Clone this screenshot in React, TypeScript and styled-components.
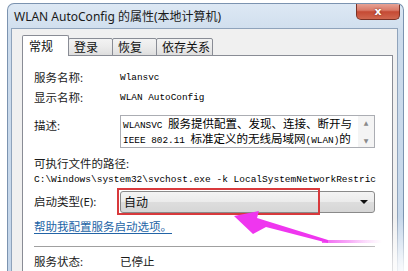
import React from "react";
import styled, { createGlobalStyle } from "styled-components";

const Global = createGlobalStyle`
  html, body { margin: 0; padding: 0; background: #ffffff; }
  #root { width: 408px; height: 271px; overflow: hidden; }
`;

const CJK = `"Noto Sans", "Noto Sans CJK SC", sans-serif`;
const MONO = `"Liberation Mono", "Noto Sans CJK SC", monospace`;

const Page = styled.div`
  position: relative;
  width: 408px;
  height: 271px;
  padding: 3px 0 0 7px;
  box-sizing: border-box;
  overflow: hidden;
`;

const Window = styled.div`
  width: 397px;
  height: 268px;
  box-sizing: border-box;
  border: 1px solid #7b93b0;
  border-bottom: none;
  border-radius: 7px 7px 0 0;
  background: linear-gradient(180deg, #dde8f4 0%, #cddcec 12%, #c4d6ea 100%);
  display: flex;
  flex-direction: column;
  overflow: hidden;
`;

const TitleBar = styled.div`
  height: 24px;
  flex: none;
  display: flex;
  align-items: flex-start;
  padding-left: 6px;
  padding-right: 3px;
`;

const Title = styled.div`
  flex: 1;
  font-family: ${CJK};
  font-size: 12px;
  line-height: 22px;
  color: #1a1a1a;
  padding-top: 2px;
  white-space: nowrap;
`;

const CloseButton = styled.div`
  width: 44px;
  height: 17px;
  margin-top: -1px;
  box-sizing: border-box;
  border: 1px solid #7a3226;
  border-top: none;
  border-radius: 0 0 5px 5px;
  background: linear-gradient(180deg, #e9a89c 0%, #d97a68 45%, #c54a34 55%, #d0674f 100%);
  display: flex;
  align-items: center;
  justify-content: center;
  color: #ffffff;
  font-family: "DejaVu Sans", sans-serif;
  font-weight: bold;
  font-size: 11px;
  text-shadow: 0 0 2px #6a1f14;
`;

const Body = styled.div`
  flex: 1;
  margin: 0 5px 0 3px;
  border: 1px solid #8fa3bb;
  border-bottom: none;
  background: #f0f0f0;
  padding: 6px 4px 0 10px;
  display: flex;
  flex-direction: column;
  min-height: 0;
`;

const TabRow = styled.div`
  display: flex;
  align-items: flex-end;
  height: 21px;
  flex: none;
  position: relative;
  z-index: 1;
`;

const Tab = styled.div<{ $active?: boolean; $w: number }>`
  width: ${(p) => p.$w}px;
  height: ${(p) => (p.$active ? 21 : 18)}px;
  box-sizing: border-box;
  margin-left: ${(p) => (p.$active ? 0 : -1)}px;
  border: 1px solid #898c95;
  border-bottom: ${(p) => (p.$active ? "none" : "1px solid #898c95")};
  border-radius: 2px 2px 0 0;
  background: ${(p) =>
    p.$active ? "#ffffff" : "linear-gradient(180deg, #f3f3f3 0%, #ebebeb 50%, #dedede 100%)"};
  font-family: ${CJK};
  font-size: 12px;
  color: #111;
  display: flex;
  align-items: center;
  padding-left: ${(p) => (p.$active ? 6 : 5)}px;
  padding-bottom: ${(p) => (p.$active ? 1 : 0)}px;
  z-index: ${(p) => (p.$active ? 2 : 1)};
`;

const Panel = styled.div`
  flex: 1;
  margin-top: -1px;
  border: 1px solid #898c95;
  border-bottom: none;
  background: #ffffff;
  padding: 12px 17px 0 11px;
  display: flex;
  flex-direction: column;
`;

const Row = styled.div<{ $h: number; $mt?: number; $top?: boolean }>`
  display: grid;
  grid-template-columns: 86px 1fr;
  align-items: ${(p) => (p.$top ? "start" : "center")};
  min-height: ${(p) => p.$h}px;
  margin-top: ${(p) => p.$mt ?? 0}px;
`;

const Label = styled.div<{ $pt?: number }>`
  font-family: ${CJK};
  font-size: 11.5px;
  line-height: 18px;
  color: #1a1a1a;
  padding-top: ${(p) => p.$pt ?? 0}px;
  white-space: nowrap;
`;

const MonoValue = styled.div<{ $size?: number }>`
  font-family: ${MONO};
  font-size: ${(p) => p.$size ?? 9.4}px;
  line-height: 14px;
  color: #000;
  white-space: nowrap;
`;

const PlainValue = styled.div`
  font-family: ${CJK};
  font-size: 11.5px;
  line-height: 18px;
  color: #1a1a1a;
`;

const DescBox = styled.div`
  height: 33px;
  box-sizing: border-box;
  border: 1px solid #abadb3;
  background: #fff;
  display: flex;
  overflow: hidden;
`;

const DescText = styled.div`
  flex: 1;
  padding: 1px 0 0 2px;
  font-family: "Noto Sans CJK SC", sans-serif;
  font-size: 11.5px;
  line-height: 13px;
  color: #000;
  white-space: nowrap;
`;

const Asc = styled.span`
  font-family: ${MONO};
  font-size: 9.4px;
`;

const ScrollBar = styled.div`
  width: 16px;
  flex: none;
  background: #f4f4f4;
  display: flex;
  flex-direction: column;
  justify-content: space-between;
  align-items: center;
  padding: 4px 0 3px;
  color: #8a8a8a;
  font-size: 6px;
  font-family: "DejaVu Sans", sans-serif;
  line-height: 6px;
`;

const Block = styled.div<{ $mt?: number }>`
  margin-top: ${(p) => p.$mt ?? 0}px;
`;

const ComboWrap = styled.div`
  position: relative;
  height: 22px;
`;

const Combo = styled.div`
  height: 22px;
  box-sizing: border-box;
  border: 1px solid #8a8a8a;
  border-radius: 3px;
  background: linear-gradient(180deg, #f4f4f4 0%, #ebebeb 50%, #dddddd 52%, #d6d6d6 100%);
  display: flex;
  align-items: center;
  justify-content: space-between;
  padding: 0 6px 0 3px;
  font-family: ${CJK};
  font-size: 12px;
  color: #111;
`;

const Caret = styled.span`
  width: 0;
  height: 0;
  border-left: 4px solid transparent;
  border-right: 4px solid transparent;
  border-top: 4px solid #111;
`;

const Highlight = styled.div`
  position: absolute;
  left: -3px;
  top: -3px;
  width: 203px;
  height: 27px;
  box-sizing: border-box;
  border: 2px solid #d8393c;
  pointer-events: none;
`;

const HelpLink = styled.a`
  display: block;
  font-family: ${CJK};
  font-size: 11.5px;
  line-height: 16px;
  color: #2364a6;
  text-decoration: underline;
  text-underline-offset: 2px;
`;

const Separator = styled.div`
  height: 1px;
  background: #a0a0a0;
  margin-top: 11px;
`;

const Overlay = styled.svg`
  position: absolute;
  left: 0;
  top: 0;
  pointer-events: none;
`;

const Fade = styled.div`
  position: absolute;
  inset: 0;
  pointer-events: none;
  background: radial-gradient(ellipse 70px 55px at 408px 271px, rgba(255,255,255,0.95), rgba(255,255,255,0) 100%);
`;

export default function App() {
  return (
    <>
      <Global />
      <Page>
        <Window>
          <TitleBar>
            <Title>WLAN AutoConfig 的属性(本地计算机)</Title>
            <CloseButton>x</CloseButton>
          </TitleBar>
          <Body>
            <TabRow>
              <Tab $active $w={47}>常规</Tab>
              <Tab $w={45}>登录</Tab>
              <Tab $w={45}>恢复</Tab>
              <Tab $w={57}>依存关系</Tab>
            </TabRow>
            <Panel>
              <Row $h={20}>
                <Label>服务名称:</Label>
                <MonoValue>Wlansvc</MonoValue>
              </Row>
              <Row $h={20}>
                <Label>显示名称:</Label>
                <MonoValue>WLAN AutoConfig</MonoValue>
              </Row>
              <Row $h={33} $mt={7} $top>
                <Label $pt={2}>描述:</Label>
                <DescBox>
                  <DescText>
                    <div>
                      <Asc>WLANSVC </Asc>服务提供配置、发现、连接、断开与
                    </div>
                    <div>
                      <Asc>IEEE 802.11 </Asc>标准定义的无线局域网<Asc>(WLAN)</Asc>的
                    </div>
                  </DescText>
                  <ScrollBar>
                    <span>▲</span>
                    <span>▼</span>
                  </ScrollBar>
                </DescBox>
              </Row>
              <Block $mt={7}>
                <Label>可执行文件的路径:</Label>
                <MonoValue $size={9.5}>C:\Windows\system32\svchost.exe -k LocalSystemNetworkRestric</MonoValue>
              </Block>
              <Row $h={22} $mt={4}>
                <Label>启动类型(E):</Label>
                <ComboWrap>
                  <Combo>
                    <span>自动</span>
                    <Caret />
                  </Combo>
                  <Highlight />
                </ComboWrap>
              </Row>
              <Block $mt={6}>
                <HelpLink>帮助我配置服务启动选项。</HelpLink>
              </Block>
              <Separator />
              <Row $h={18} $mt={6}>
                <Label>服务状态:</Label>
                <PlainValue>已停止</PlainValue>
              </Row>
            </Panel>
          </Body>
        </Window>
        <Overlay width={408} height={271} viewBox="0 0 408 271">
          <defs>
            <linearGradient id="glow" x1="0" x2="1" y1="0" y2="0">
              <stop offset="0" stopColor="#ee3cee" stopOpacity="0.8" />
              <stop offset="1" stopColor="#ee3cee" stopOpacity="0" />
            </linearGradient>
          </defs>
          <polygon
            points="234,216 259,211 257,218 328,240 328,243 266,227 253,234"
            fill="#ef36ef"
          />
          <rect x={322} y={240} width={60} height={3} fill="url(#glow)" />
        </Overlay>
        <Fade />
      </Page>
    </>
  );
}
